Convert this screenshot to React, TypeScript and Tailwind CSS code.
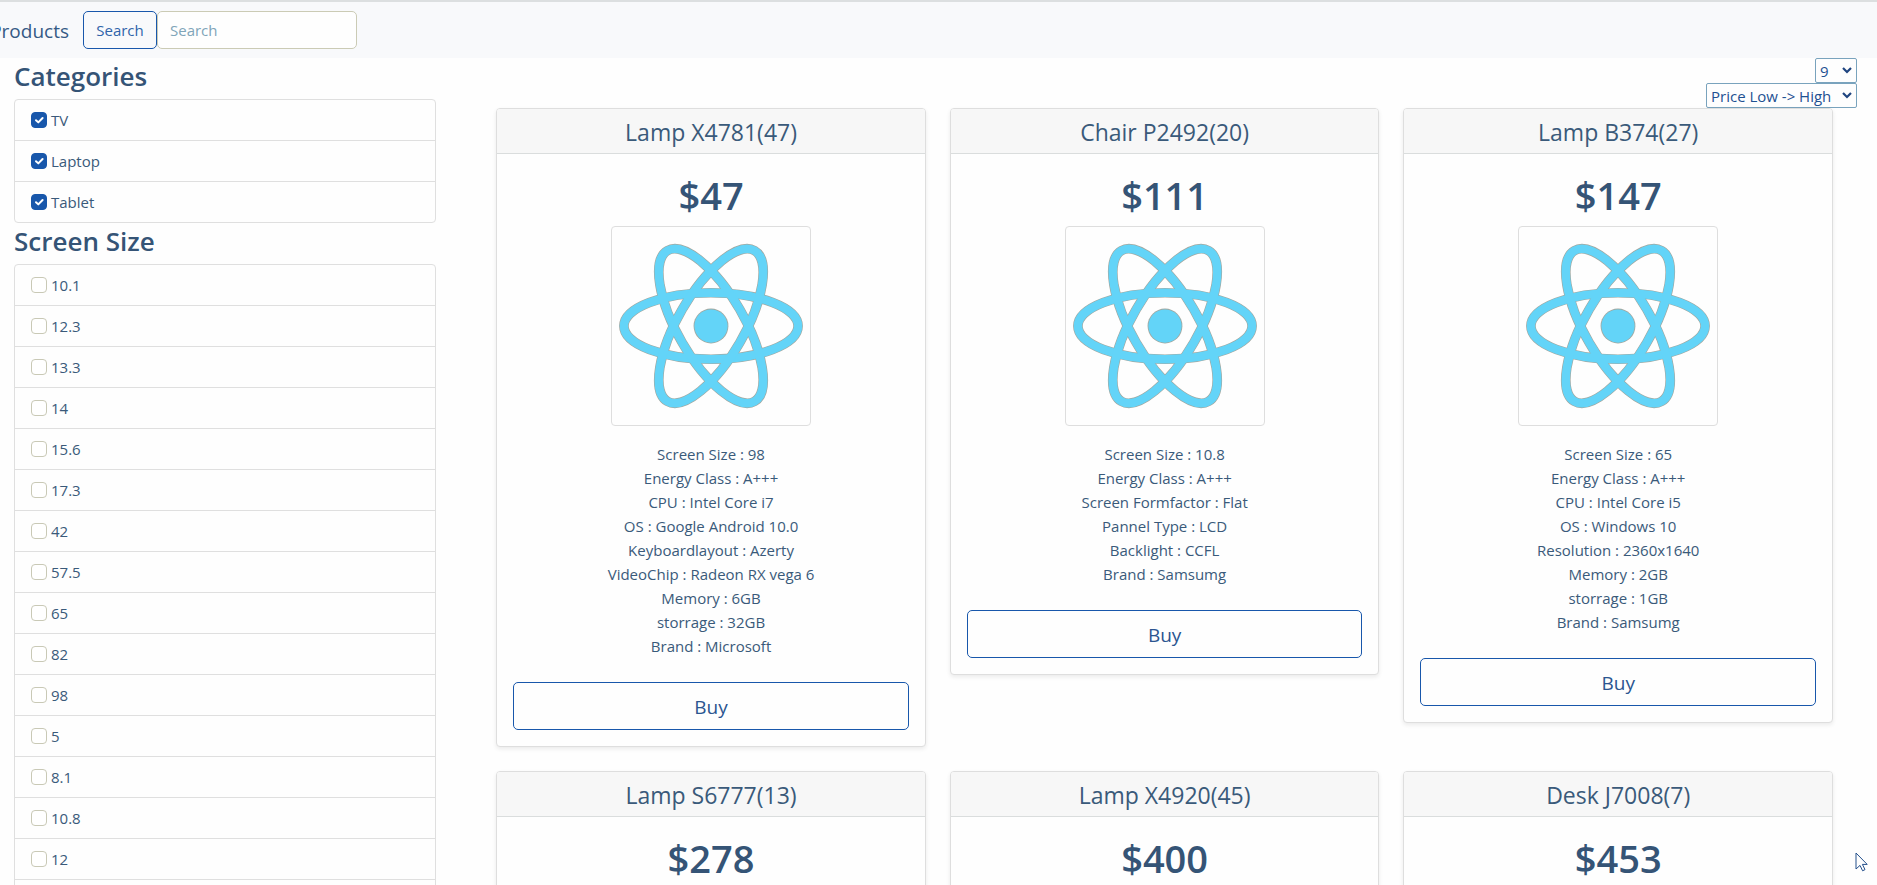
import { useState } from "react";

type Product = { name: string; price: number; specs: string[] };

const categories = ["TV", "Laptop", "Tablet"];

const screenSizes = [
  "10.1", "12.3", "13.3", "14", "15.6", "17.3", "42", "57.5",
  "65", "82", "98", "5", "8.1", "10.8", "12", "15",
];

const products: Product[] = [
  {
    name: "Lamp X4781(47)",
    price: 47,
    specs: [
      "Screen Size : 98",
      "Energy Class : A+++",
      "CPU : Intel Core i7",
      "OS : Google Android 10.0",
      "Keyboardlayout : Azerty",
      "VideoChip : Radeon RX vega 6",
      "Memory : 6GB",
      "storrage : 32GB",
      "Brand : Microsoft",
    ],
  },
  {
    name: "Chair P2492(20)",
    price: 111,
    specs: [
      "Screen Size : 10.8",
      "Energy Class : A+++",
      "Screen Formfactor : Flat",
      "Pannel Type : LCD",
      "Backlight : CCFL",
      "Brand : Samsumg",
    ],
  },
  {
    name: "Lamp B374(27)",
    price: 147,
    specs: [
      "Screen Size : 65",
      "Energy Class : A+++",
      "CPU : Intel Core i5",
      "OS : Windows 10",
      "Resolution : 2360x1640",
      "Memory : 2GB",
      "storrage : 1GB",
      "Brand : Samsumg",
    ],
  },
  { name: "Lamp S6777(13)", price: 278, specs: [] },
  { name: "Lamp X4920(45)", price: 400, specs: [] },
  { name: "Desk J7008(7)", price: 453, specs: [] },
];

function Orbits() {
  return (
    <>
      <ellipse rx="11" ry="4.2" />
      <ellipse rx="11" ry="4.2" transform="rotate(60)" />
      <ellipse rx="11" ry="4.2" transform="rotate(120)" />
    </>
  );
}

function ReactLogo() {
  return (
    <svg viewBox="-12 -12 24 24" className="size-full" role="img" aria-label="Product">
      <g fill="none" stroke="#a3a79f" strokeWidth="1.22">
        <Orbits />
      </g>
      <circle r="2.2" fill="#a3a79f" />
      <g fill="none" stroke="#63d4f8" strokeWidth="1.06">
        <Orbits />
      </g>
      <circle r="2.1" fill="#63d4f8" />
    </svg>
  );
}

function FilterList({ title, items, initial }: { title: string; items: string[]; initial: boolean }) {
  const [checked, setChecked] = useState<boolean[]>(items.map(() => initial));
  return (
    <section>
      <h3 className="h-[41px] text-[26px] leading-9 font-semibold text-[#355476]">{title}</h3>
      <ul className="divide-y divide-[#dfdfdf] rounded-[4px] border border-[#dfdfdf]">
        {items.map((item, i) => (
          <li key={item} className="px-4 py-2">
            <label className="flex h-6 w-fit items-center gap-1">
              <span className="grid size-4">
                <input
                  type="checkbox"
                  checked={checked[i]}
                  onChange={() => setChecked(checked.map((c, j) => (j === i ? !c : c)))}
                  className="peer col-start-1 row-start-1 size-4 appearance-none rounded-[4px] border border-[#c9c9b6] bg-white checked:border-[#1857ab] checked:bg-[#1857ab]"
                />
                <svg
                  viewBox="0 0 16 16"
                  fill="none"
                  stroke="white"
                  strokeWidth="2"
                  strokeLinecap="round"
                  strokeLinejoin="round"
                  className="pointer-events-none invisible col-start-1 row-start-1 size-4 peer-checked:visible"
                >
                  <path d="M5 8.2l2.3 2.2L11.6 6" />
                </svg>
              </span>
              {item}
            </label>
          </li>
        ))}
      </ul>
    </section>
  );
}

function ProductCard({ product }: { product: Product }) {
  return (
    <article className="rounded-[4px] border border-[#dedede] bg-[#fefefe] text-center shadow-[0_2px_4px_rgba(0,0,0,0.08)]">
      <header className="rounded-t-[3px] border-b border-[#dadddd] bg-[#f7f7f7] py-2">
        <h4 className="h-7 text-[23px] leading-[30px]">{product.name}</h4>
      </header>
      <div className="p-4">
        <h1 className="h-14 text-[38px] leading-[50px] font-semibold text-[#355476]">${product.price}</h1>
        <div className="mx-auto size-[200px] rounded-[4px] border border-[#dedede] p-1">
          <ReactLogo />
        </div>
        <ul className="mt-4 mb-6">
          {product.specs.map((spec) => (
            <li key={spec}>{spec}</li>
          ))}
        </ul>
        <button
          type="button"
          className="h-12 w-full rounded-[5px] border border-[#1857ab] pt-0.5 text-[19px] text-[#2b5590]"
        >
          Buy
        </button>
      </div>
    </article>
  );
}

function Chevron() {
  return (
    <svg
      viewBox="0 0 10 7"
      fill="none"
      stroke="#1f4580"
      strokeWidth="2.2"
      className="pointer-events-none col-start-1 row-start-1 mr-[5px] h-[7px] w-[10px] self-center justify-self-end"
    >
      <path d="M1 1l4 4 4-4" />
    </svg>
  );
}

export default function App() {
  return (
    <div className="h-screen overflow-y-auto bg-[#fefefe] font-['Open_Sans','Noto_Sans',sans-serif] text-[15px] leading-6 text-[#3a5a7a] [scrollbar-width:none]">
      <nav className="flex h-[58px] items-center overflow-hidden border-t-2 border-[#dcdfe0] bg-[#f8f9fb]">
        <a href="#products" className="flex w-[69px] shrink-0 justify-end pt-0.5 text-[19px] text-[#355a85]">
          Products
        </a>
        <form className="ml-[14px] flex" onSubmit={(e) => e.preventDefault()}>
          <button type="submit" className="h-[38px] w-[74px] rounded-[5px] border border-[#1857ab] text-[#2f64aa]">
            Search
          </button>
          <input
            type="search"
            aria-label="Search"
            placeholder="Search"
            className="h-[38px] w-[200px] rounded-[5px] border border-[#cbcbb5] bg-[#fefefe] px-3 placeholder:text-[#80a5b9]"
          />
        </form>
      </nav>

      <div className="flex">
        <aside className="w-1/4 shrink-0 pr-[33px] pl-3.5">
          <FilterList title="Categories" items={categories} initial={true} />
          <FilterList title="Screen Size" items={screenSizes} initial={false} />
        </aside>

        <main className="min-w-0 flex-1 pr-5 pl-[27px]">
          <div className="flex flex-col items-end text-[#1f5192]">
            <div className="grid">
              <select
                aria-label="Products per page"
                defaultValue="9"
                className="col-start-1 row-start-1 h-[25px] w-[42px] appearance-none rounded-[2px] border border-[#79a3bd] bg-[#fefefe] pl-1"
              >
                <option>9</option>
                <option>18</option>
              </select>
              <Chevron />
            </div>
            <div className="grid">
              <select
                aria-label="Sort order"
                className="col-start-1 row-start-1 h-[25px] w-[151px] appearance-none rounded-[2px] border border-[#79a3bd] bg-[#fefefe] pl-1"
              >
                <option>Price Low -&gt; High</option>
                <option>Price High -&gt; Low</option>
              </select>
              <Chevron />
            </div>
          </div>
          <div className="mr-6 grid grid-cols-3 items-start gap-6">
            {products.map((product) => (
              <ProductCard key={product.name} product={product} />
            ))}
          </div>
        </main>
      </div>

      <svg
        viewBox="0 0 13 20"
        className="pointer-events-none fixed right-[9px] bottom-[13px] h-5 w-[13px]"
        fill="#fefefe"
        stroke="#24508c"
        strokeWidth="1"
      >
        <path d="M1 1v16l4-3.6 2.6 5.4 2.4-1.2-2.6-5.2h4.8z" />
      </svg>
    </div>
  );
}
